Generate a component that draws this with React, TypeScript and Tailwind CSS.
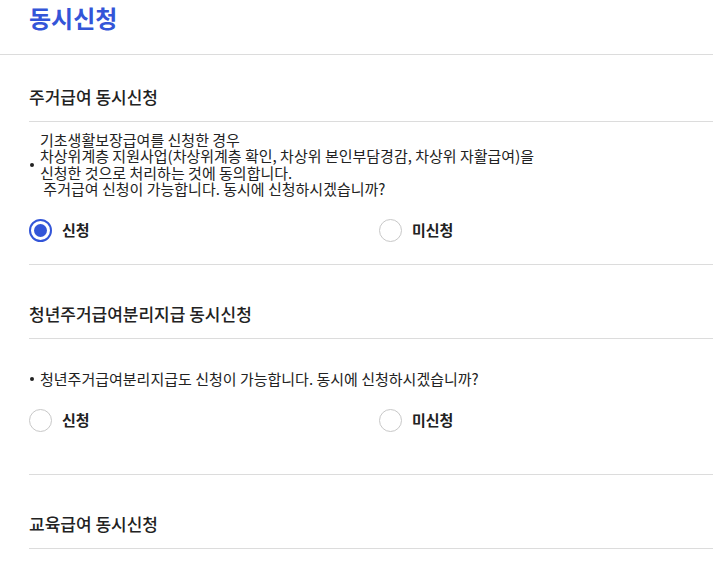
import { useState } from "react";

const font = { fontFamily: '"Noto Sans CJK KR", "Noto Sans", sans-serif' };

function Radio({ checked, label, onClick }: { checked: boolean; label: string; onClick: () => void }) {
  return (
    <button type="button" onClick={onClick} className="flex items-center gap-[10px]">
      <span
        className={
          checked
            ? "w-[23px] h-[23px] rounded-full border-2 border-[#3355d8] flex items-center justify-center bg-white"
            : "w-[23px] h-[23px] rounded-full border border-[#c8c8c8] bg-white"
        }
      >
        {checked && <span className="w-[13px] h-[13px] rounded-full bg-[#3355d8]" />}
      </span>
      <span className="text-[15px] font-bold text-[#222] leading-[22px]">{label}</span>
    </button>
  );
}

function Choice({ value, onChange }: { value: string; onChange: (v: string) => void }) {
  return (
    <div className="flex">
      <div className="w-[350px]">
        <Radio checked={value === "y"} label="신청" onClick={() => onChange("y")} />
      </div>
      <Radio checked={value === "n"} label="미신청" onClick={() => onChange("n")} />
    </div>
  );
}

export default function App() {
  const [housing, setHousing] = useState("y");
  const [youth, setYouth] = useState("");

  return (
    <div className="min-h-screen bg-white text-[#222]" style={font}>
      <div className="h-[55px] border-b border-[#dcdcdc] px-[29px]">
        <h1 className="text-[24px] font-bold text-[#3355d8] leading-[36px]">동시신청</h1>
      </div>

      <div className="pl-[29px]">
        {/* 주거급여 */}
        <div className="pt-[30px] pb-[12px] border-b border-[#dcdcdc]">
          <h2 className="text-[17px] font-medium leading-[24px]">주거급여 동시신청</h2>
        </div>
        <div className="flex items-center mt-[10px]">
          <span className="w-[4px] h-[4px] rounded-full bg-[#222] mr-[6px] ml-[1px]" />
          <div className="text-[15px] leading-[16.4px] whitespace-pre">
            <div>기초생활보장급여를 신청한 경우</div>
            <div>차상위계층 지원사업(차상위계층 확인, 차상위 본인부담경감, 차상위 자활급여)을</div>
            <div>신청한 것으로 처리하는 것에 동의합니다.</div>
            <div> 주거급여 신청이 가능합니다. 동시에 신청하시겠습니까?</div>
          </div>
        </div>
        <div className="mt-[21px] pb-[22px] border-b border-[#dcdcdc]">
          <Choice value={housing} onChange={setHousing} />
        </div>

        {/* 청년주거급여분리지급 */}
        <div className="pt-[37px] pb-[12px] border-b border-[#dcdcdc]">
          <h2 className="text-[17px] font-medium leading-[24px]">청년주거급여분리지급 동시신청</h2>
        </div>
        <div className="flex items-center mt-[32px]">
          <span className="w-[4px] h-[4px] rounded-full bg-[#222] mr-[6px] ml-[1px]" />
          <div className="text-[15px] leading-[16px]">청년주거급여분리지급도 신청이 가능합니다. 동시에 신청하시겠습니까?</div>
        </div>
        <div className="mt-[22px] pb-[42px] border-b border-[#dcdcdc]">
          <Choice value={youth} onChange={setYouth} />
        </div>

        {/* 교육급여 */}
        <div className="pt-[37px] pb-[12px] border-b border-[#dcdcdc]">
          <h2 className="text-[17px] font-medium leading-[24px]">교육급여 동시신청</h2>
        </div>
      </div>
    </div>
  );
}
